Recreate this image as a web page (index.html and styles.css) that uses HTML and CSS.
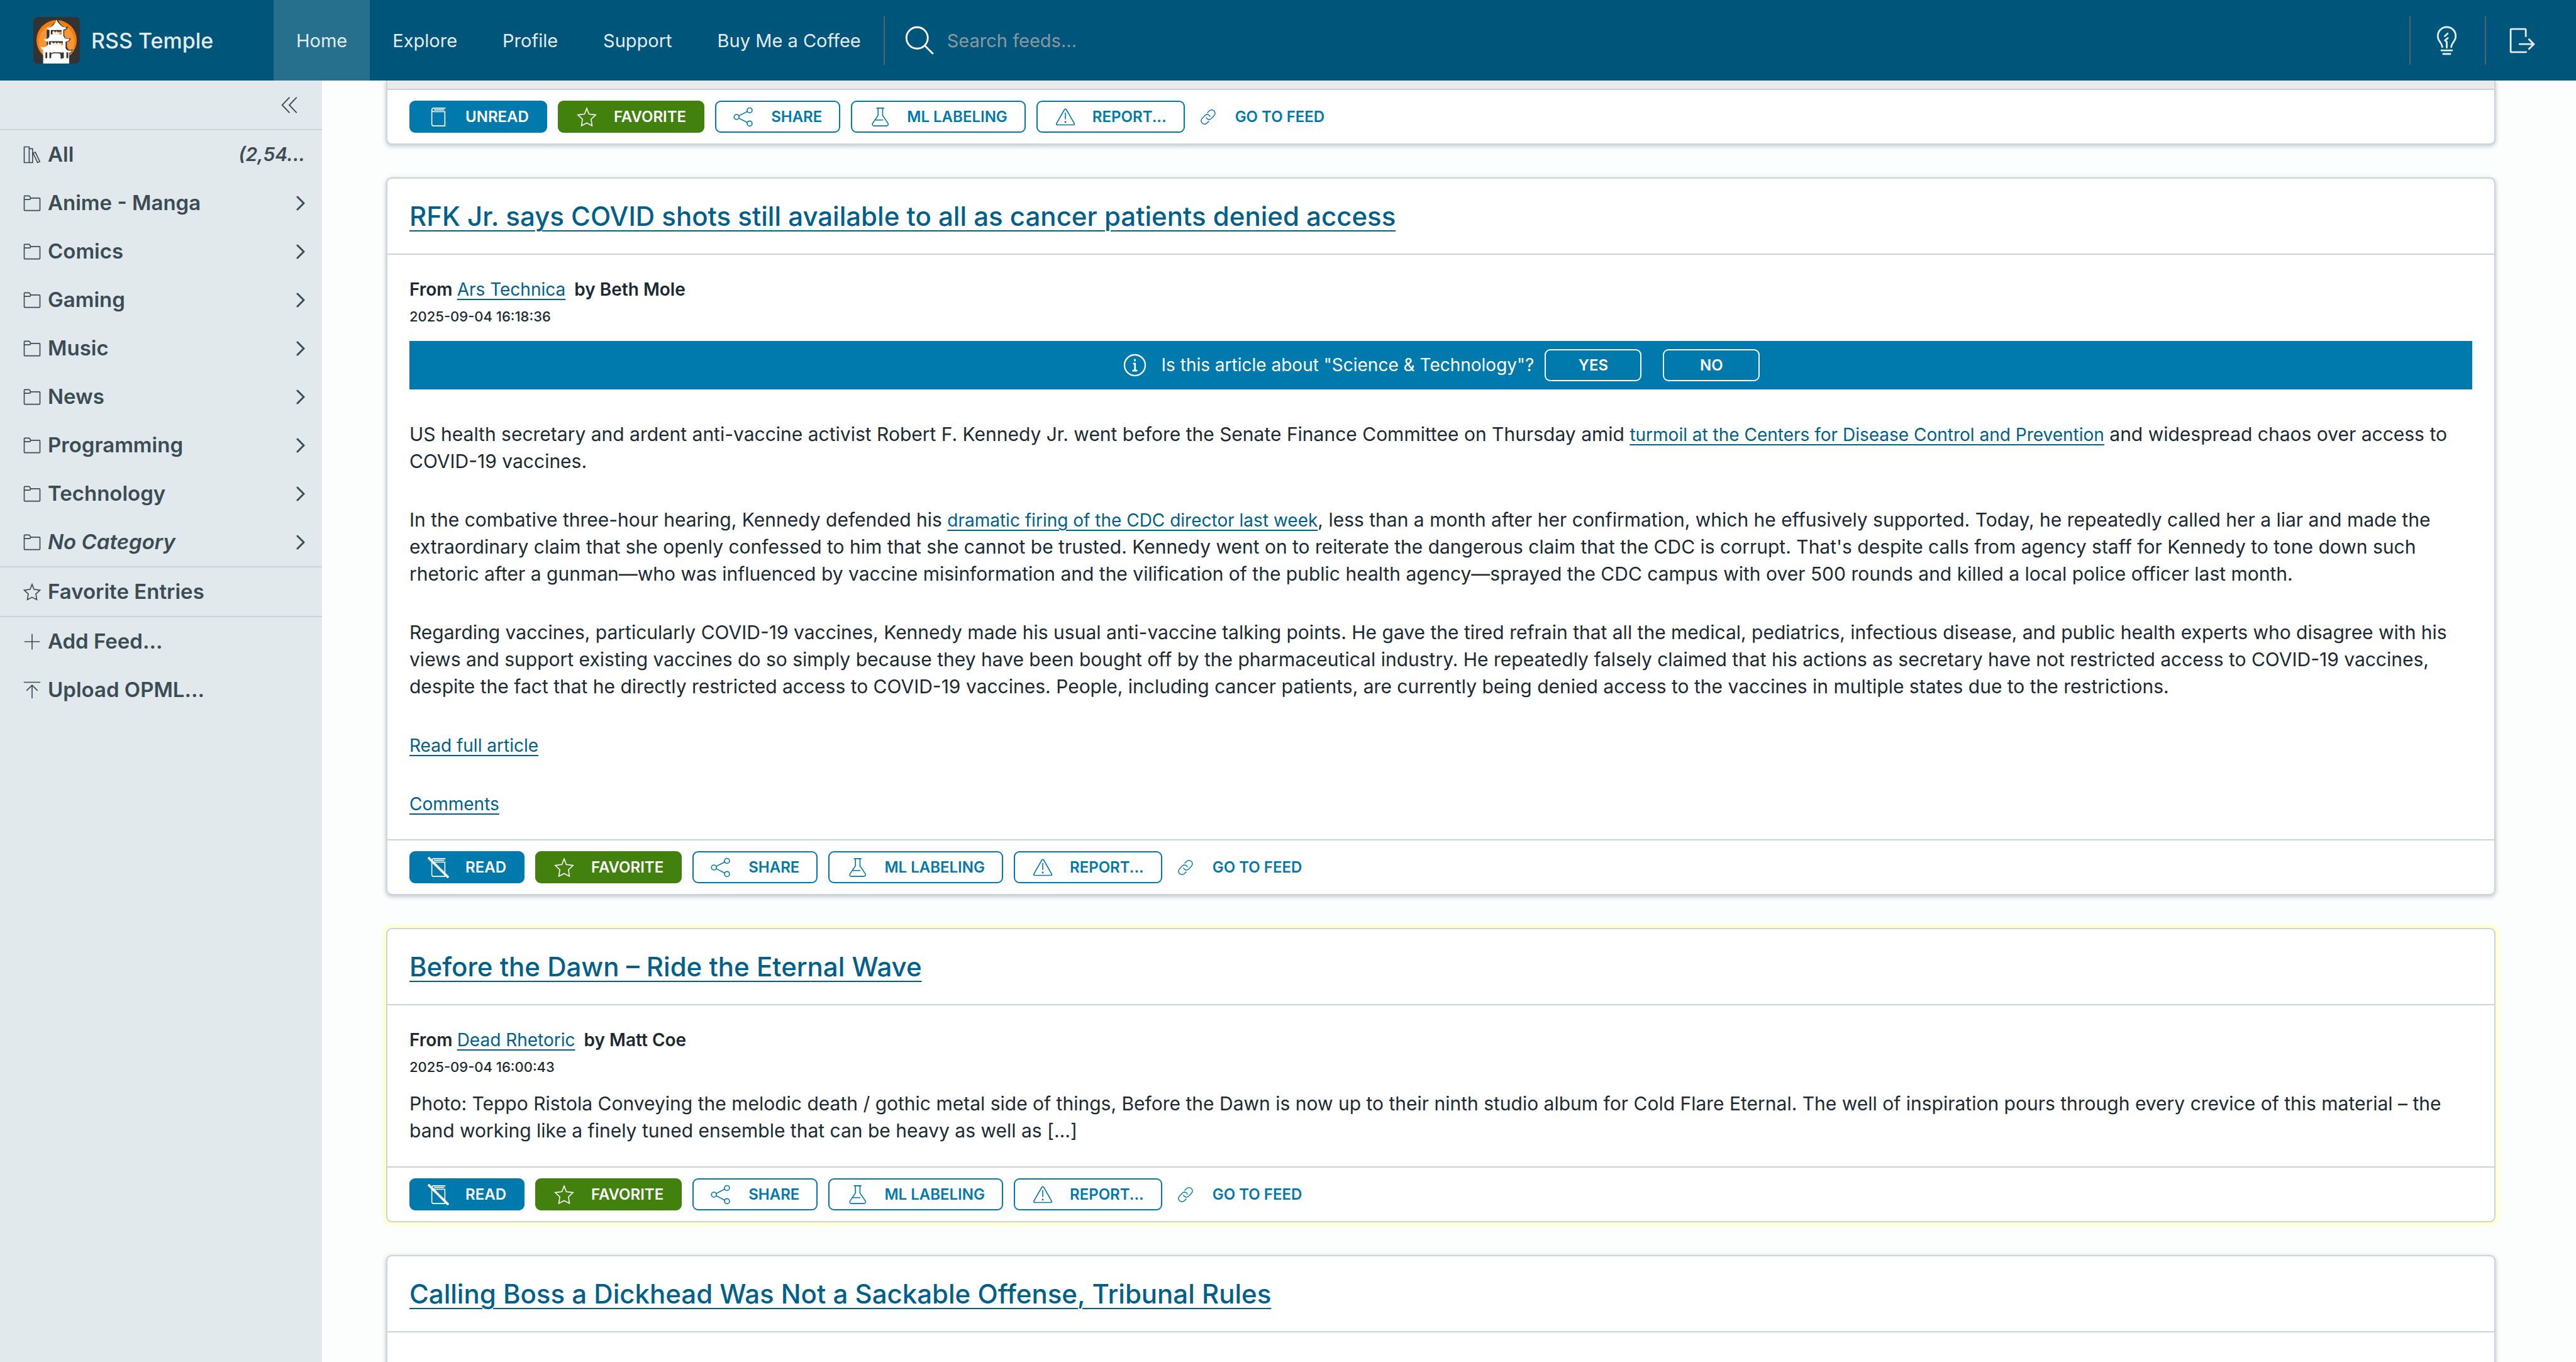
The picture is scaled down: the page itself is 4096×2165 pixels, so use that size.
FILE: index.html
```html
<!DOCTYPE html>
<html lang="en">
<head>
<meta charset="utf-8">
<meta name="viewport" content="width=device-width, initial-scale=1">
<title>RSS Temple</title>
<link rel="stylesheet" href="styles.css">
</head>
<body>
<svg class="sprite" aria-hidden="true">
  <symbol id="i-search" viewBox="0 0 36 36"><circle cx="15" cy="15" r="12"/><path d="M24 24l9 9"/></symbol>
  <symbol id="i-bulb" viewBox="0 0 36 36"><path d="M13 26c0-3-1.500-5-3-7.200A10 10 0 1 1 26 18.800C24.500 21 23 23 23 26"/><path d="M18 26v-6.500l-1.800-1.800 3-2.600M15.800 13l3.200-3" stroke-linecap="round"/><path d="M12 29h12M14 33h8" stroke-linecap="round"/></symbol>
  <symbol id="i-logout" viewBox="0 0 36 36"><path d="M22 14V6a1 1 0 0 0-1-1H6a1 1 0 0 0-1 1v24a1 1 0 0 0 1 1h15.500a1 1 0 0 0 1-1"/><path d="M15 22h16M25.600 16.600L31 22l-5.400 5.400" stroke-linecap="round"/></symbol>
  <symbol id="i-collapse" viewBox="0 0 36 36"><path d="M18 5.500L6 18l12 12.500M30 5.500L18 18l12 12.500" stroke-linecap="round"/></symbol>
  <symbol id="i-library" viewBox="0 0 36 36"><path d="M3 3h9.500v30H3zM12.500 6.500h6.500V33h-6.500M20 15l4.200-2 8.500 18-4.200 2z"/></symbol>
  <symbol id="i-folder" viewBox="0 0 36 36"><path d="M3 31V5a1 1 0 0 1 1-1h8c1 0 2 1.200 3.200 4.200H32a1 1 0 0 1 1 1V31a1 1 0 0 1-1 1H4a1 1 0 0 1-1-1zM3 11h10c1.500 0 2-.800 2-2.500"/></symbol>
  <symbol id="i-star" viewBox="0 0 36 36"><path d="M18 3.500L21.700 13l11.300 1.500-7.700 7.200 1.600 11L18 28l-8.900 4.700 1.600-11L3 14.500 14.300 13z"/></symbol>
  <symbol id="i-plus" viewBox="0 0 36 36"><path d="M18 4v28M4 18h28" stroke-linecap="round"/></symbol>
  <symbol id="i-upload" viewBox="0 0 36 36"><path d="M3 3h30M18 33V9M8 18.500L18 8.500l10 10" stroke-linecap="round"/></symbol>
  <symbol id="i-chevron" viewBox="0 0 14 24"><path d="M2 2l10 10L2 22" stroke-linecap="round"/></symbol>
  <symbol id="i-info" viewBox="0 0 36 36"><circle cx="18" cy="18" r="14.500"/><path d="M18 9.500v3M15.500 15.800H18.200V25M14.500 25.500h7" stroke-width="2.400"/></symbol>
  <symbol id="i-book" viewBox="0 0 36 36"><path d="M30 3H10a3 3 0 0 0-3 3v24a3 3 0 0 0 3 3h19V9H10a3 3 0 0 1-3-3M10.500 6H28"/></symbol>
  <symbol id="i-book-off" viewBox="0 0 36 36"><path d="M30 3H10a3 3 0 0 0-3 3v24a3 3 0 0 0 3 3h19V9H10a3 3 0 0 1-3-3M10.500 6H28"/><path d="M1 1l34 34" stroke-width="4"/></symbol>
  <symbol id="i-share" viewBox="0 0 36 36"><circle cx="27.500" cy="6.800" r="4.200"/><circle cx="27.500" cy="29" r="4.200"/><circle cx="5.500" cy="18" r="4.200"/><path d="M9.300 16l14.400-7.300M9.300 20l14.400 7.200"/></symbol>
  <symbol id="i-flask" viewBox="0 0 36 36"><path d="M12.200 3h13M15 3v12.300L6 28.500c-1.300 2-.100 4.500 2.400 4.500h20.800c2.500 0 3.700-2.500 2.400-4.500l-8.900-13.200V3M10.500 23h13"/></symbol>
  <symbol id="i-warn" viewBox="0 0 36 36"><path d="M16.600 5.300a1.700 1.700 0 0 1 2.900 0L33 28.800a1.700 1.700 0 0 1-1.500 2.500H4.600a1.700 1.700 0 0 1-1.500-2.500z"/><path d="M18 10.500V22" /><path d="M18 25v2.600" stroke-width="2.800"/></symbol>
  <symbol id="i-link" viewBox="0 0 36 36"><path d="M16 9l4.500-4.400A7.300 7.300 0 0 1 31.200 15l-6.600 6.700A7 7 0 0 1 13.300 18.500M20 27l-4.500 4.400A7.300 7.300 0 0 1 4.800 21l6.600-6.700A7 7 0 0 1 22.700 17.500"/></symbol>
</svg>

<header class="topbar">
  <a class="brand" href="#">
    <svg class="logo" viewBox="0 0 104 104" aria-hidden="true">
      <rect width="104" height="104" rx="9" fill="#333"/>
      <circle cx="52" cy="52" r="45" fill="#f17e0c"/>
      <circle cx="52" cy="56" r="40" fill="#f89637"/>
      <path fill="#333" d="M55 6c3 8 9 14 16 17 2 0 4-1 6-2 0 5-4 9-8 9v11c2 7 7 9 15 6-1 5-4 8-9 9v10c2 6 5 10 13 6-1 6-4 8-7 9v17H30V30z"/>
      <path fill="#fff" d="M52 6c3 8 9 13 14 16l8 2c-1 3-3 4-7 4v14c2 5 6 8 14 7-1 4-4 6-9 6v14c2 6 6 7 14 6-1 3-3 5-6 5v24H22V73c-2 0-5-2-5-6 7 2 14-1 16-7V55c-5 0-9-2-9-6 7 2 12-3 12-7V29c-3 0-6-2-6-5 9 2 19-8 22-18z"/>
      <path fill="#333" d="M39 29h24v10H39zM35 54h31v8H35zM27 79h4v13h-4zM36 79h4v13h-4zM64 79h4v13h-4zM74 79h4v13h-4z"/>
      <path fill="#f89637" d="M43 33h20v6H43zM39 58h27v5H39z"/>
      <path fill="#fff" d="M43 37v-4l3-2 3 6 3-6 3 6 3-4v6H43zM39 60v-3l3-1 3 5 4-5 3 5 4-5 3 5 3-4v6H39z"/>
      <path fill="#333" d="M40 92V84c0-4 3-5 6-5h14c4 0 5 2 5 6v8z"/>
      <path fill="#fff" d="M40 97V86c1-4 3-5 6-5h10c4 0 5 2 5 6v10z"/>
    </svg>
    <span>RSS Temple</span>
  </a>
  <nav class="nav">
    <a class="active" href="#">Home</a>
    <a href="#">Explore</a>
    <a href="#">Profile</a>
    <a href="#">Support</a>
    <a href="#">Buy Me a Coffee</a>
  </nav>
  <form class="search" role="search">
    <label for="q" aria-label="Search feeds"><svg class="icon-lg"><use href="#i-search"/></svg></label>
    <input id="q" type="text" placeholder="Search feeds...">
  </form>
  <div class="tools">
    <button type="button" class="tool" aria-label="Toggle theme"><svg class="icon-lg"><use href="#i-bulb"/></svg></button>
    <button type="button" class="tool tool-last" aria-label="Log out"><svg class="icon-lg"><use href="#i-logout"/></svg></button>
  </div>
</header>

<div class="layout">
  <aside class="sidebar">
    <div class="collapse"><button type="button" aria-label="Collapse"><svg class="icon-md"><use href="#i-collapse"/></svg></button></div>
    <nav class="group">
      <a class="item" href="#"><svg class="icon-md"><use href="#i-library"/></svg><span>All</span><em class="count">(2,54...</em></a>
      <a class="item" href="#"><svg class="icon-md"><use href="#i-folder"/></svg><span>Anime - Manga</span><svg class="chevron"><use href="#i-chevron"/></svg></a>
      <a class="item" href="#"><svg class="icon-md"><use href="#i-folder"/></svg><span>Comics</span><svg class="chevron"><use href="#i-chevron"/></svg></a>
      <a class="item" href="#"><svg class="icon-md"><use href="#i-folder"/></svg><span>Gaming</span><svg class="chevron"><use href="#i-chevron"/></svg></a>
      <a class="item" href="#"><svg class="icon-md"><use href="#i-folder"/></svg><span>Music</span><svg class="chevron"><use href="#i-chevron"/></svg></a>
      <a class="item" href="#"><svg class="icon-md"><use href="#i-folder"/></svg><span>News</span><svg class="chevron"><use href="#i-chevron"/></svg></a>
      <a class="item" href="#"><svg class="icon-md"><use href="#i-folder"/></svg><span>Programming</span><svg class="chevron"><use href="#i-chevron"/></svg></a>
      <a class="item" href="#"><svg class="icon-md"><use href="#i-folder"/></svg><span>Technology</span><svg class="chevron"><use href="#i-chevron"/></svg></a>
      <a class="item" href="#"><svg class="icon-md"><use href="#i-folder"/></svg><em>No Category</em><svg class="chevron"><use href="#i-chevron"/></svg></a>
    </nav>
    <nav class="group">
      <a class="item" href="#"><svg class="icon-md"><use href="#i-star"/></svg><span>Favorite Entries</span></a>
    </nav>
    <div class="group">
      <button type="button" class="item"><svg class="icon-md"><use href="#i-plus"/></svg><span>Add Feed...</span></button>
      <button type="button" class="item"><svg class="icon-md"><use href="#i-upload"/></svg><span>Upload OPML...</span></button>
    </div>
  </aside>

  <main class="feed">
    <article class="card card-cut">
      <div class="embed"></div>
      <footer class="actions">
        <button type="button" class="btn btn-blue"><svg class="icon-sm"><use href="#i-book"/></svg>UNREAD</button>
        <button type="button" class="btn btn-green"><svg class="icon-sm"><use href="#i-star"/></svg>FAVORITE</button>
        <button type="button" class="btn"><svg class="icon-sm"><use href="#i-share"/></svg>SHARE</button>
        <button type="button" class="btn"><svg class="icon-sm"><use href="#i-flask"/></svg>ML LABELING</button>
        <button type="button" class="btn"><svg class="icon-sm"><use href="#i-warn"/></svg>REPORT...</button>
        <a class="btn btn-link" href="#"><svg class="icon-xs"><use href="#i-link"/></svg>GO TO FEED</a>
      </footer>
    </article>

    <article class="card">
      <h2 class="title"><a href="#">RFK Jr. says COVID shots still available to all as cancer patients denied access</a></h2>
      <div class="body">
        <p class="from">From <a href="#">Ars Technica</a> <span class="author">by Beth Mole</span></p>
        <time class="date">2025-09-04 16:18:36</time>
        <div class="banner">
          <svg class="icon-info"><use href="#i-info"/></svg>
          <span>Is this article about "Science &amp; Technology"?</span>
          <button type="button" class="btn btn-vote">YES</button>
          <button type="button" class="btn btn-vote">NO</button>
        </div>
        <div class="text text-far">
          <p>US health secretary and ardent anti-vaccine activist Robert F. Kennedy Jr. went before the Senate Finance Committee on Thursday amid <a href="#">turmoil at the Centers for Disease Control and Prevention</a> and widespread chaos over access to COVID-19 vaccines.</p>
          <p>In the combative three-hour hearing, Kennedy defended his <a href="#">dramatic firing of the CDC director last week</a>, less than a month after her confirmation, which he effusively supported. Today, he repeatedly called her a liar and made the extraordinary claim that she openly confessed to him that she cannot be trusted. Kennedy went on to reiterate the dangerous claim that the CDC is corrupt. That's despite calls from agency staff for Kennedy to tone down such rhetoric after a gunman—who was influenced by vaccine misinformation and the vilification of the public health agency—sprayed the CDC campus with over 500 rounds and killed a local police officer last month.</p>
          <p>Regarding vaccines, particularly COVID-19 vaccines, Kennedy made his usual anti-vaccine talking points. He gave the tired refrain that all the medical, pediatrics, infectious disease, and public health experts who disagree with his views and support existing vaccines do so simply because they have been bought off by the pharmaceutical industry. He repeatedly falsely claimed that his actions as secretary have not restricted access to COVID-19 vaccines, despite the fact that he directly restricted access to COVID-19 vaccines. People, including cancer patients, are currently being denied access to the vaccines in multiple states due to the restrictions.</p>
          <p><a href="#">Read full article</a></p>
          <p><a href="#">Comments</a></p>
        </div>
      </div>
      <footer class="actions">
        <button type="button" class="btn btn-blue"><svg class="icon-sm"><use href="#i-book-off"/></svg>READ</button>
        <button type="button" class="btn btn-green"><svg class="icon-sm"><use href="#i-star"/></svg>FAVORITE</button>
        <button type="button" class="btn"><svg class="icon-sm"><use href="#i-share"/></svg>SHARE</button>
        <button type="button" class="btn"><svg class="icon-sm"><use href="#i-flask"/></svg>ML LABELING</button>
        <button type="button" class="btn"><svg class="icon-sm"><use href="#i-warn"/></svg>REPORT...</button>
        <a class="btn btn-link" href="#"><svg class="icon-xs"><use href="#i-link"/></svg>GO TO FEED</a>
      </footer>
    </article>

    <article class="card card-current">
      <h2 class="title"><a href="#">Before the Dawn – Ride the Eternal Wave</a></h2>
      <div class="body">
        <p class="from">From <a href="#">Dead Rhetoric</a> <span class="author">by Matt Coe</span></p>
        <time class="date">2025-09-04 16:00:43</time>
        <div class="text">
          <p>Photo: Teppo Ristola Conveying the melodic death / gothic metal side of things, Before the Dawn is now up to their ninth studio album for Cold Flare Eternal. The well of inspiration pours through every crevice of this material – the band working like a finely tuned ensemble that can be heavy as well as […]</p>
        </div>
      </div>
      <footer class="actions">
        <button type="button" class="btn btn-blue"><svg class="icon-sm"><use href="#i-book-off"/></svg>READ</button>
        <button type="button" class="btn btn-green"><svg class="icon-sm"><use href="#i-star"/></svg>FAVORITE</button>
        <button type="button" class="btn"><svg class="icon-sm"><use href="#i-share"/></svg>SHARE</button>
        <button type="button" class="btn"><svg class="icon-sm"><use href="#i-flask"/></svg>ML LABELING</button>
        <button type="button" class="btn"><svg class="icon-sm"><use href="#i-warn"/></svg>REPORT...</button>
        <a class="btn btn-link" href="#"><svg class="icon-xs"><use href="#i-link"/></svg>GO TO FEED</a>
      </footer>
    </article>

    <article class="card">
      <h2 class="title"><a href="#">Calling Boss a Dickhead Was Not a Sackable Offense, Tribunal Rules</a></h2>
      <div class="body"></div>
    </article>
  </main>
</div>
</body>
</html>
```
FILE: styles.css
```css
:root {
  --blue: #0079ad;
  --link: #00608a;
  --ink: #1b2a32;
  --side: #3b4c54;
  --line: #cbd4d8;
}

* { box-sizing: border-box; }

body {
  margin: 0;
  height: 100vh;
  display: flex;
  flex-direction: column;
  overflow: hidden;
  font-family: Inter, "Liberation Sans", sans-serif;
  font-size: 30px;
  line-height: 43px;
  color: var(--ink);
  background: #fcfdfd;
}

a { color: var(--link); }
p, h2 { margin: 0; }
button, input { font: inherit; color: inherit; }
button { background: none; border: 0; padding: 0; cursor: pointer; }

svg { flex: none; fill: none; stroke: currentColor; stroke-width: 2; }
.sprite { position: absolute; width: 0; height: 0; }
.icon-lg { width: 51px; height: 51px; display: block; }
.icon-md { width: 30px; height: 30px; display: block; }
.icon-sm { width: 34px; height: 34px; display: block; stroke-width: 1.7; }
.icon-xs { width: 26px; height: 26px; display: block; }
.icon-info { width: 41px; height: 41px; display: block; }

/* Top bar */
.topbar {
  flex: none;
  display: flex;
  height: 128px;
  background: #00567a;
  color: #e3ebef;
  font-size: 29px;
}
.brand {
  width: 435px;
  padding-left: 53px;
  display: flex;
  align-items: center;
  gap: 18px;
  color: inherit;
  font-size: 34px;
  font-weight: 500;
  text-decoration: none;
}
.logo { width: 74px; height: 74px; stroke: none; }
.nav { display: flex; }
.nav a {
  display: flex;
  align-items: center;
  padding: 0 36px;
  color: inherit;
  text-decoration: none;
}
.nav .active { background: #26708e; }
.search, .tool { display: flex; align-items: center; }
.search { flex: 1; gap: 18px; }
.search::before, .tool::before {
  content: "";
  width: 2px;
  height: 77px;
  background: #56646b;
}
.search::before { margin-right: 12px; }
.search label { color: #fff; }
.search input {
  flex: 1;
  border: 0;
  padding: 0;
  background: none;
  outline: 0;
}
.search input::placeholder { color: #8b989f; opacity: 1; }
.tools { display: flex; }
.tool { gap: 32px; padding-right: 35px; }
.tool-last { padding-right: 60px; }

/* Sidebar */
.layout { flex: 1; min-height: 0; display: flex; }
.sidebar {
  flex: none;
  width: 512px;
  background: #e1e9ec;
  color: var(--side);
}
.collapse {
  display: flex;
  justify-content: flex-end;
  align-items: center;
  height: 77px;
  padding-right: 35px;
}
.collapse .icon-md { width: 34px; height: 34px; }
.group { border-top: 2px solid var(--line); }
.item {
  display: flex;
  align-items: center;
  gap: 10px;
  width: 100%;
  height: 77px;
  padding: 0 27px 0 36px;
  color: inherit;
  font-size: 33px;
  font-weight: 600;
  text-align: left;
  text-decoration: none;
}
.chevron { margin-left: auto; width: 14px; height: 24px; stroke-width: 3; }
.count { margin-left: auto; font-size: 30px; }

/* Entry list */
.feed {
  flex: 1;
  min-width: 0;
  display: flex;
  flex-direction: column;
  gap: 52px;
  padding: 0 128px 0 102px;
  overflow: hidden;
}
.card {
  flex: none;
  background: #fff;
  border: 2px solid var(--line);
  border-radius: 9px;
  box-shadow: 0 2px 6px 1px rgba(90, 110, 118, .32);
}
.card-cut { border-top: 0; border-top-left-radius: 0; border-top-right-radius: 0; }
.card-current { box-shadow: 0 0 3px 6px #ffffd6; }
.embed { height: 13px; background: #eaeaea; }
.title {
  padding: 38px 35px;
  border-bottom: 2px solid var(--line);
  font-size: 42px;
  line-height: 43px;
  font-weight: 500;
}
.title a { text-decoration-thickness: 2px; text-underline-offset: 7px; }
.body { padding: 30px 35px 35px; }
.body a {
  font-size: 28px;
  line-height: 28px;
  text-decoration-thickness: 2px;
  text-underline-offset: 5px;
}
.from { font-size: 28px; line-height: 51px; font-weight: 600; }
.from a { font-weight: 400; }
.author { margin-left: 7px; }
.date { display: block; font-size: 22px; line-height: 34px; font-weight: 500; }
.banner {
  display: flex;
  justify-content: center;
  align-items: center;
  height: 77px;
  margin-top: 22px;
  background: var(--blue);
  color: #fff;
  font-size: 28px;
}
.banner span { margin: 0 17px 0 22px; }
.text { display: flex; flex-direction: column; gap: 50px; margin-top: 20px; }
.text-far { margin-top: 50px; }

.actions {
  display: flex;
  gap: 17px;
  padding: 17px 35px;
  border-top: 2px solid var(--line);
}
.btn {
  display: flex;
  align-items: center;
  gap: 26px;
  height: 51px;
  padding: 0 27px;
  border: 2px solid var(--blue);
  border-radius: 9px;
  color: var(--blue);
  font-size: 24px;
  font-weight: 600;
  white-space: nowrap;
}
.btn-blue { background: var(--blue); color: #fff; }
.btn-green { background: #42810e; border-color: #42810e; color: #fff; }
.btn-link {
  gap: 30px;
  padding: 0 5px;
  border-color: transparent;
  text-decoration: none;
}
.btn-vote { width: 154px; justify-content: center; border-color: #fff; color: #fff; }
.btn-vote + .btn-vote { margin-left: 34px; }
```
